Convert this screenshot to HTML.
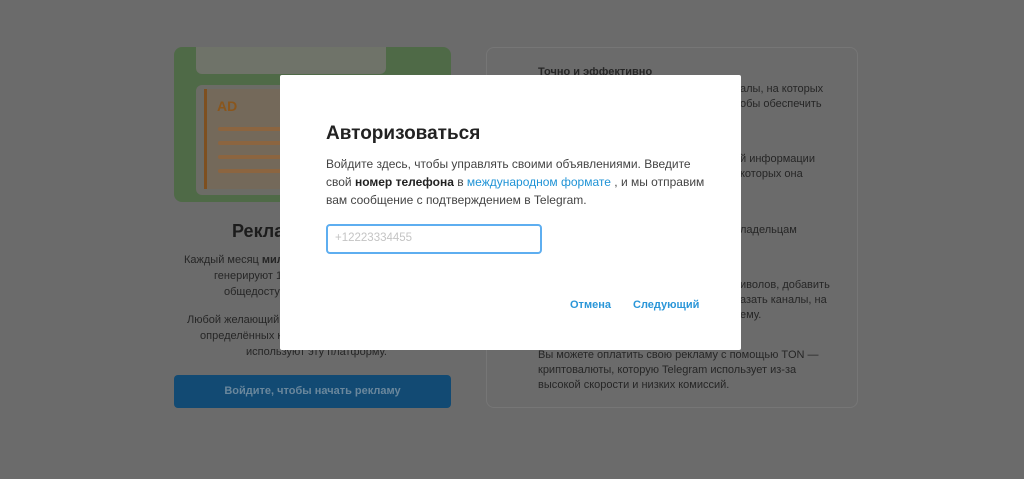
<!DOCTYPE html><html><head><meta charset="utf-8"><style>
*{margin:0;padding:0;box-sizing:border-box}
html,body{width:1024px;height:479px;background:#6b6b6b;font-family:"Liberation Sans",sans-serif;position:relative;overflow:hidden}
.a{position:absolute}
.t{color:#262626;font-size:11px;line-height:16px}
</style></head><body>
<div class="a" style="left:174px;top:47px;width:277px;height:155px;background:#4f6a47;border-radius:8px;overflow:hidden">
 <div class="a" style="left:22px;top:0;width:190px;height:27px;background:#6f7369;border-radius:0 0 6px 6px"></div>
 <div class="a" style="left:22px;top:38px;width:250px;height:110px;background:#6c6c66;border-radius:6px"></div>
 <div class="a" style="left:30px;top:42px;width:140px;height:100px;background:#74695a;border-left:3px solid #7e5020"></div>
 <div class="a" style="left:43px;top:51px;color:#8a561c;font-weight:bold;font-size:14px">AD</div>
 <div class="a" style="left:44px;top:80px;width:126px;height:4px;background:#8c6540;border-radius:2px"></div>
 <div class="a" style="left:44px;top:94px;width:126px;height:4px;background:#8c6540;border-radius:2px"></div>
 <div class="a" style="left:44px;top:108px;width:126px;height:4px;background:#8c6540;border-radius:2px"></div>
 <div class="a" style="left:44px;top:122px;width:126px;height:4px;background:#8c6540;border-radius:2px"></div>
</div>
<div class="a" style="left:232px;top:221px;font-size:18px;font-weight:bold;color:#1c1c1c">Реклама</div>
<div class="a t" style="left:184px;top:252px">Каждый месяц <b>миллиарды</b></div>
<div class="a t" style="left:214px;top:268px">генерируют 1</div>
<div class="a t" style="left:224px;top:284px">общедосту</div>
<div class="a t" style="left:187px;top:312px">Любой желающий</div>
<div class="a t" style="left:200px;top:328px">определённых к</div>
<div class="a t" style="left:246px;top:344px">используют эту платформу.</div>
<div class="a" style="left:174px;top:375px;width:277px;height:33px;background:#124a73;border-radius:4px;color:#6a879c;font-weight:bold;font-size:11px;text-align:center;line-height:33px">Войдите, чтобы начать рекламу</div>
<div class="a" style="left:486px;top:47px;width:372px;height:361px;border:1px solid #767676;border-radius:8px"></div>
<div class="a t" style="left:538px;top:64px;font-weight:bold">Точно и эффективно</div>
<div class="a t" style="left:740px;top:81px">алы, на которых</div>
<div class="a t" style="left:740px;top:96px">обы обеспечить</div>
<div class="a t" style="left:740px;top:151px">й информации</div>
<div class="a t" style="left:740px;top:166px">которых она</div>
<div class="a t" style="left:740px;top:222px">ладельцам</div>
<div class="a t" style="left:740px;top:277px">иволов, добавить</div>
<div class="a t" style="left:740px;top:292px">азать каналы, на</div>
<div class="a t" style="left:740px;top:307px">ему.</div>
<div class="a t" style="left:538px;top:348px;width:300px;line-height:15px">Вы можете оплатить свою рекламу с помощью TON — криптовалюты, которую Telegram использует из-за высокой скорости и низких комиссий.</div>
<div class="a" style="left:280px;top:75px;width:461px;height:275px;background:#fff;border-radius:2px">
 <div class="a" style="left:46px;top:48px;font-size:19px;font-weight:bold;color:#222">Авторизоваться</div>
 <div class="a" style="left:46px;top:80px;width:380px;font-size:12px;line-height:18px;color:#444">Войдите здесь, чтобы управлять своими объявлениями. Введите свой <b style="color:#222">номер телефона</b> в <span style="color:#1f93d6">международном формате</span> , и мы отправим вам сообщение с подтверждением в Telegram.</div>
 <div class="a" style="left:46px;top:149px;width:216px;height:30px;border:2px solid #5eaef0;border-radius:4px;font-size:11.5px;color:#c4c4c4;padding:6px 0 0 7px">+12223334455</div>
 <div class="a" style="left:290px;top:224px;font-size:11px;font-weight:bold;color:#2a96d8">Отмена</div>
 <div class="a" style="left:353px;top:224px;font-size:11px;font-weight:bold;color:#2a96d8">Следующий</div>
</div>
</body></html>
